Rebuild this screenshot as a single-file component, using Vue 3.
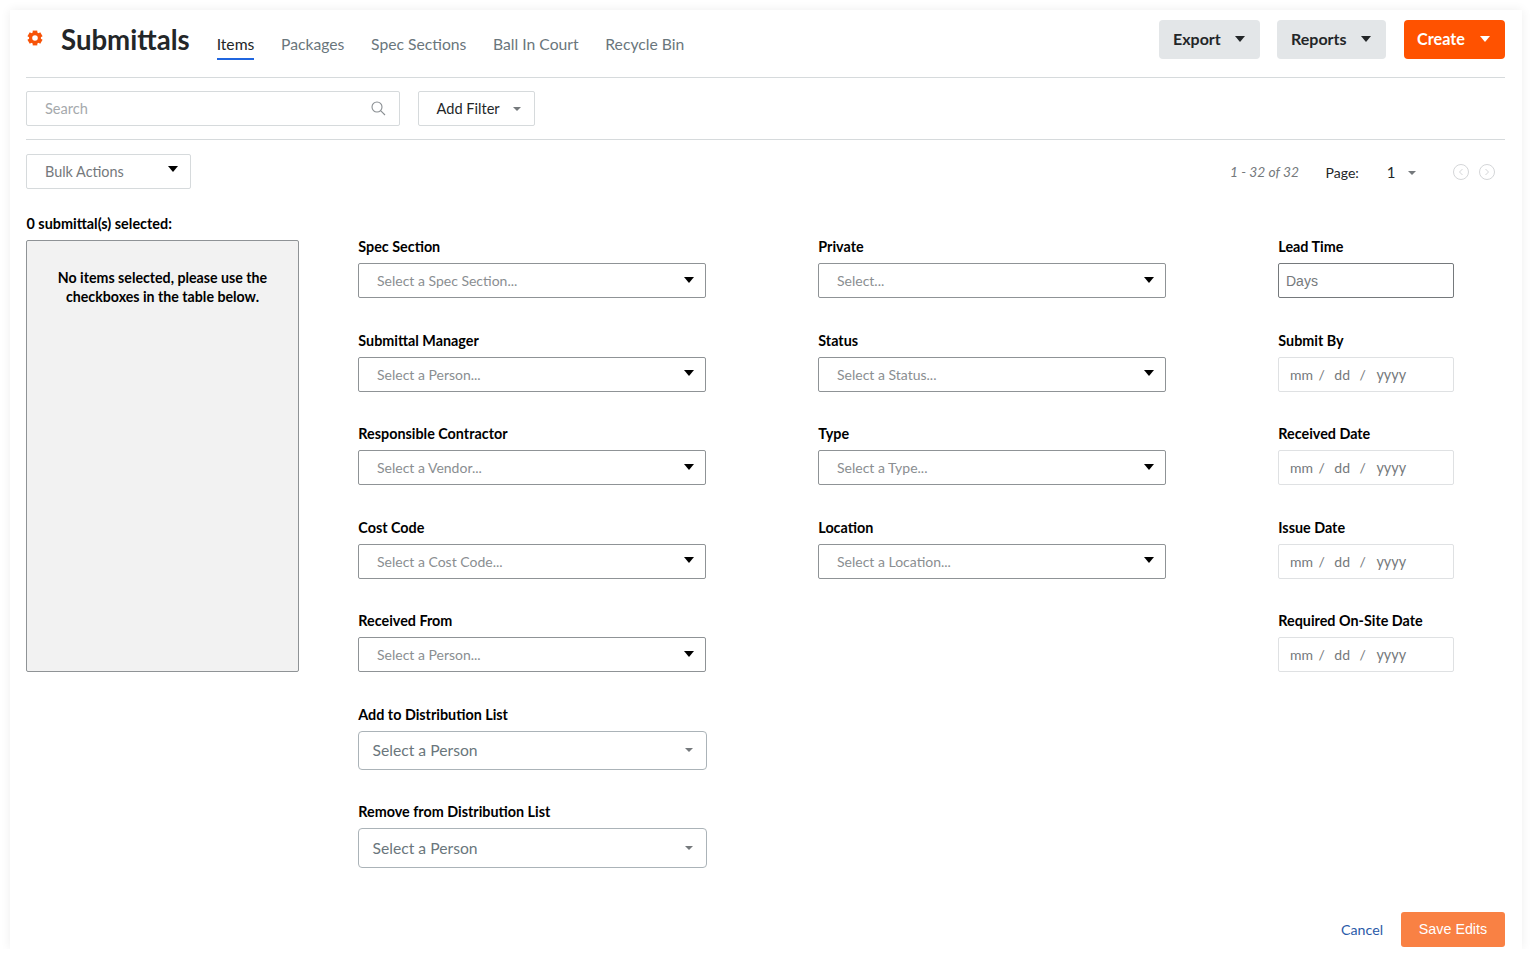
<script setup>
const tabs = ['Items', 'Packages', 'Spec Sections', 'Ball In Court', 'Recycle Bin']
const teeth = [0, 60, 120, 180, 240, 300]
const col1 = [
  ['Spec Section', 'Select a Spec Section...'],
  ['Submittal Manager', 'Select a Person...'],
  ['Responsible Contractor', 'Select a Vendor...'],
  ['Cost Code', 'Select a Cost Code...'],
  ['Received From', 'Select a Person...']
]
const col2 = [
  ['Private', 'Select...'],
  ['Status', 'Select a Status...'],
  ['Type', 'Select a Type...'],
  ['Location', 'Select a Location...']
]
const dates = ['Submit By', 'Received Date', 'Issue Date', 'Required On-Site Date']
</script>

<template>
  <div class="card">
    <header class="head">
      <svg class="gear" width="16" height="16" viewBox="0 0 16 16">
        <rect v-for="t in teeth" :key="t" x="5.7" y="0.6" width="4.6" height="4" fill="#f75308" :transform="`rotate(${t} 8 8)`" />
        <circle cx="8" cy="8" r="4.4" fill="none" stroke="#f75308" stroke-width="3.2" />
      </svg>
      <h1 class="title">Submittals</h1>
      <nav class="tabs">
        <a v-for="(t, i) in tabs" :key="t" class="tab" :class="{ on: i === 0 }">{{ t }}</a>
      </nav>
      <div class="actions">
        <button class="btn grey export"><span>Export</span><i class="tri dark"></i></button>
        <button class="btn grey reports"><span>Reports</span><i class="tri dark"></i></button>
        <button class="btn orange create"><span>Create</span><i class="tri white"></i></button>
      </div>
    </header>

    <div class="filters">
      <div class="search">
        <span>Search</span>
        <svg width="16" height="16" viewBox="0 0 16 16" fill="none" stroke="#8a8f93" stroke-width="1.1">
          <circle cx="7" cy="7" r="5" />
          <path d="M10.6 10.6 15 15" />
        </svg>
      </div>
      <div class="add-filter">Add Filter<i class="tri small"></i></div>
    </div>

    <div class="bulk-row">
      <div class="bulk"><span>Bulk Actions</span><i class="tri black"></i></div>
      <div class="pager">
        <em class="count">1 - 32 of 32</em>
        <span class="page-label">Page:</span>
        <span class="page-num">1</span>
        <i class="tri small page-tri"></i>
        <span class="circ first">
          <svg width="16" height="16" viewBox="0 0 16 16" fill="none" stroke="#d4d6d8"><circle cx="8" cy="8" r="7.5" /><path d="M9.5 5 6.5 8l3 3" /></svg>
        </span>
        <span class="circ">
          <svg width="16" height="16" viewBox="0 0 16 16" fill="none" stroke="#d4d6d8"><circle cx="8" cy="8" r="7.5" /><path d="M6.5 5l3 3-3 3" /></svg>
        </span>
      </div>
    </div>

    <main class="form">
      <section class="selected">
        <div class="sel-label">0 submittal(s) selected:</div>
        <div class="sel-box">No items selected, please use the checkboxes in the table below.</div>
      </section>

      <section class="col">
        <div v-for="f in col1" :key="f[0]" class="field">
          <label>{{ f[0] }}</label>
          <div class="select"><span>{{ f[1] }}</span><i class="tri black"></i></div>
        </div>
        <div class="field">
          <label>Add to Distribution List</label>
          <div class="select2 first2"><span>Select a Person</span><i class="tri small"></i></div>
        </div>
        <div class="field">
          <label>Remove from Distribution List</label>
          <div class="select2 second2"><span>Select a Person</span><i class="tri small"></i></div>
        </div>
      </section>

      <section class="col">
        <div v-for="f in col2" :key="f[0]" class="field">
          <label>{{ f[0] }}</label>
          <div class="select"><span>{{ f[1] }}</span><i class="tri black"></i></div>
        </div>
      </section>

      <section class="col narrow">
        <div class="field">
          <label>Lead Time</label>
          <div class="days">Days</div>
        </div>
        <div v-for="d in dates" :key="d" class="field">
          <label>{{ d }}</label>
          <div class="date">
            <span class="mm">mm</span><span class="sl1">/</span><span class="dd">dd</span><span class="sl2">/</span><span class="yy">yyyy</span>
          </div>
        </div>
      </section>
    </main>

    <footer class="foot">
      <a class="cancel">Cancel</a>
      <button class="save">Save Edits</button>
    </footer>
  </div>
</template>

<style>
html, body { margin: 0; background: #fff; }
</style>

<style scoped>
.card {
  box-sizing: border-box;
  width: 1512px;
  height: 939px;
  margin: 10px 0 0 10px;
  padding: 0 17px 0 16px;
  background: #fff;
  box-shadow: 0 0 10px rgba(0, 0, 0, 0.07);
  font-family: Lato, "Liberation Sans", sans-serif;
  color: #232628;
  position: relative;
  overflow: hidden;
}
.tri {
  display: inline-block;
  width: 0;
  height: 0;
  border-style: solid;
  border-color: transparent;
  border-width: 6px 5.5px 0;
}
.tri.dark { border-top-color: #232628; }
.tri.white { border-top-color: #fff; }
.tri.black { border-top-color: #000; }
.tri.small { border-width: 4px 4px 0; border-top-color: #75797c; }

.head {
  display: flex;
  align-items: flex-start;
  height: 67px;
  border-bottom: 1px solid #d6dadc;
}
.gear { margin: 20px 0 0 1px; flex: none; }
.title {
  margin: 13px 0 0 18px;
  font-size: 27.6px;
  line-height: 34px;
  font-weight: 700;
  letter-spacing: 0;
  white-space: nowrap;
}
.tabs { display: flex; gap: 26.7px; margin: 23px 0 0 27px; }
.tab {
  font-size: 15.7px;
  line-height: 22px;
  height: 25px;
  color: #6a767c;
  white-space: nowrap;
}
.tab.on { color: #232628; border-bottom: 2px solid #2066df; }
.actions { display: flex; margin: 10px 0 0 auto; }
.btn {
  height: 39px;
  border: 0;
  border-radius: 4px;
  font: 700 16px Lato, sans-serif;
  display: flex;
  align-items: center;
  padding: 0 0 0 14px;
}
.btn span { margin-top: -2px; }
.btn .tri { margin-left: 14px; margin-top: -1px; }
.grey { background: #e3e6e8; color: #232628; }
.orange { background: #ff5200; color: #fff; padding-left: 13px; }
.orange span { font-size: 16.2px; }
.orange .tri { margin-left: 15px; }
.export { width: 101px; }
.reports { width: 109px; margin-left: 17px; }
.create { width: 101px; margin-left: 18px; }

.filters {
  display: flex;
  gap: 18px;
  height: 62px;
  box-sizing: border-box;
  padding-top: 13px;
  border-bottom: 1px solid #d6dadc;
}
.search, .add-filter, .bulk {
  box-sizing: border-box;
  height: 35px;
  border: 1px solid #d6dadc;
  border-radius: 2px;
  display: flex;
  align-items: center;
  font-size: 14.6px;
}
.search {
  width: 374px;
  padding: 0 13px 0 18px;
  justify-content: space-between;
  color: #a5a9ac;
}
.search svg { margin-top: -2px; }
.add-filter { width: 117px; padding: 0 0 1px 17.5px; color: #232628; }
.add-filter .tri { margin-left: 13.5px; margin-top: 1px; }

.bulk-row {
  display: flex;
  justify-content: space-between;
  padding-top: 14px;
  height: 49px;
}
.bulk {
  width: 165px;
  padding: 0 12px 0 18px;
  justify-content: space-between;
  color: #75797c;
  font-size: 14.4px;
}
.bulk .tri { margin-top: -5px; }
.pager {
  display: flex;
  align-items: center;
  height: 35px;
  padding-right: 10px;
  font-size: 14px;
}
.count { color: #75797c; font-size: 13.8px; }
.page-label { margin-left: 26.5px; margin-top: 1px; }
.page-num { margin-left: 28px; font-size: 15px; margin-top: 1px; }
.page-tri { margin-left: 12.5px; margin-top: 2px; }
.circ { display: flex; margin-left: 10px; }
.circ.first { margin-left: 37px; }

.form {
  display: grid;
  grid-template-columns: 332px 460px 460px 176px;
  padding-top: 12px;
}
.sel-label {
  font-size: 14.4px;
  line-height: 24px;
  height: 24px;
  font-weight: 700;
  color: #000;
  margin-top: -3px;
  padding-left: 0.5px;
}
.sel-box {
  box-sizing: border-box;
  width: 273px;
  height: 432px;
  margin-top: 4px;
  padding: 27px 20px 0;
  background: #f2f2f2;
  border: 1px solid #8f9396;
  border-radius: 2px;
  font-size: 14.2px;
  line-height: 19px;
  font-weight: 700;
  color: #000;
  text-align: center;
}
.col { padding-top: 24px; }
.field { height: 93.5px; }
.field:nth-child(6) { height: 97.5px; }
.field label {
  display: block;
  height: 24px;
  margin: 0;
  padding-left: 0.3px;
  font-size: 14.35px;
  line-height: 16px;
  font-weight: 700;
  color: #000;
}
.select {
  box-sizing: border-box;
  width: 348px;
  height: 35px;
  padding: 0 11px 0 18px;
  border: 1px solid #8f9396;
  border-radius: 2px;
  display: flex;
  align-items: center;
  justify-content: space-between;
  font-size: 14px;
  color: #8a8e91;
}
.select .tri { margin-top: -2px; }
.select2 {
  box-sizing: border-box;
  width: 349px;
  border: 1px solid #abb3b8;
  border-radius: 4px;
  display: flex;
  align-items: center;
  justify-content: space-between;
  padding: 0 13px 0 13.5px;
  font-size: 15.7px;
  color: #6a767c;
}
.first2 { height: 39px; }
.second2 { height: 40px; }
.days {
  box-sizing: border-box;
  width: 176px;
  height: 35px;
  border: 1px solid #75797c;
  border-radius: 2px;
  padding-left: 7px;
  display: flex;
  align-items: center;
  font-family: "Liberation Sans", Arial, sans-serif;
  font-size: 14px;
  color: #75797c;
}
.date {
  box-sizing: border-box;
  width: 176px;
  height: 35px;
  border: 1px solid #dfe1e3;
  border-radius: 2px;
  padding-left: 11px;
  display: flex;
  align-items: center;
  font-size: 14px;
  color: #75797c;
}
.sl1 { margin-left: 5.5px; }
.dd { margin-left: 9.5px; }
.sl2 { margin-left: 9.5px; }
.yy { margin-left: 10.5px; font-size: 14.4px; }

.foot {
  position: absolute;
  right: 17px;
  bottom: 2px;
  display: flex;
  align-items: center;
}
.cancel {
  font-size: 14.2px;
  color: #2a5aa8;
  margin-right: 18px;
}
.save {
  width: 104px;
  height: 35px;
  border: 0;
  border-radius: 3px;
  padding: 0 0 2px;
  background: #f98144;
  color: #fff;
  font: 14.3px "Liberation Sans", Arial, sans-serif;
}
</style>
